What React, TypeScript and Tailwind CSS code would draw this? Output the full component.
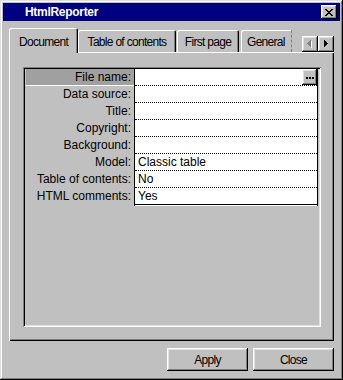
import React from "react";

const raised =
  "shadow-[inset_-1px_-1px_#000,inset_1px_1px_#fff,inset_-2px_-2px_#808080,inset_2px_2px_#dfdfdf]";

const rows: [string, string][] = [
  ["File name:", ""],
  ["Data source:", ""],
  ["Title:", ""],
  ["Copyright:", ""],
  ["Background:", ""],
  ["Model:", "Classic table"],
  ["Table of contents:", "No"],
  ["HTML comments:", "Yes"],
];

function CloseX() {
  const px: [number, number][] = [
    [0, 0], [1, 0], [6, 0], [7, 0],
    [1, 1], [2, 1], [5, 1], [6, 1],
    [2, 2], [3, 2], [4, 2], [5, 2],
    [3, 3], [4, 3],
    [2, 4], [3, 4], [4, 4], [5, 4],
    [1, 5], [2, 5], [5, 5], [6, 5],
    [0, 6], [1, 6], [6, 6], [7, 6],
  ];
  return (
    <svg width="8" height="7" viewBox="0 0 8 7" shapeRendering="crispEdges">
      {px.map(([x, y], i) => (
        <rect key={i} x={x} y={y} width="1" height="1" fill="#000" />
      ))}
    </svg>
  );
}

function Arrow({ dir, disabled }: { dir: "left" | "right"; disabled?: boolean }) {
  const cols =
    dir === "right"
      ? [
          [0, 0, 7],
          [1, 1, 5],
          [2, 2, 3],
          [3, 3, 1],
        ]
      : [
          [0, 3, 1],
          [1, 2, 3],
          [2, 1, 5],
          [3, 0, 7],
        ];
  return (
    <svg width="6" height="9" viewBox="0 0 6 9" shapeRendering="crispEdges">
      {disabled &&
        cols.map(([x, y, h], i) => (
          <rect key={"s" + i} x={x + 1} y={y + 1} width="1" height={h} fill="#fff" />
        ))}
      {cols.map(([x, y, h], i) => (
        <rect key={i} x={x} y={y} width="1" height={h} fill={disabled ? "#808080" : "#000"} />
      ))}
    </svg>
  );
}

export default function App() {
  return (
    <div className="w-[343px] h-[380px] bg-[#c0c0c0] p-[3px] flex flex-col shadow-[inset_-1px_-1px_#000,inset_1px_1px_#dfdfdf,inset_-2px_-2px_#808080,inset_2px_2px_#fff] font-['Liberation_Sans',Arial,sans-serif] text-black overflow-hidden">
      {/* Title bar */}
      <div className="h-[18px] bg-[#000080] flex items-center pl-[22px] pr-[3px]">
        <span className="text-white font-bold text-[12px] leading-[18px] tracking-[-0.3px]">HtmlReporter</span>
        <div className={`ml-auto w-[16px] h-[14px] bg-[#c0c0c0] flex items-center justify-center ${raised}`}>
          <div className="pl-[0px] pt-[0px]">
            <CloseX />
          </div>
        </div>
      </div>

      {/* Tabs row */}
      <div className="h-[31px] px-[6px] flex items-end text-[12px] tracking-[-0.7px]">
        <div className="relative z-10 -mb-px h-[25px] w-[69px] bg-[#c0c0c0] rounded-t-[2px] shadow-[inset_1px_1px_#fff,inset_-1px_0_#000,inset_-2px_0_#808080] flex justify-center pt-[6px] leading-[16px]">
          Document
        </div>
        <div className="h-[22px] w-[98px] rounded-t-[2px] shadow-[inset_1px_1px_#fff,inset_-1px_0_#000,inset_-2px_0_#808080] flex justify-center pt-[4px] leading-[16px]">
          Table of contents
        </div>
        <div className="ml-[1px] h-[22px] w-[62px] rounded-t-[2px] shadow-[inset_1px_1px_#fff,inset_-1px_0_#000,inset_-2px_0_#808080] flex justify-center pt-[4px] leading-[16px]">
          First page
        </div>
        <div className="ml-[2px] h-[22px] w-[51px] rounded-tl-[2px] shadow-[inset_1px_1px_#fff] border-r border-dashed border-[#808080] flex pl-[6px] pt-[4px] leading-[16px] overflow-hidden whitespace-nowrap">
          General
        </div>
        <div className="ml-auto flex">
          <div className={`w-[16px] h-[16px] flex items-center justify-center ${raised}`}>
            <Arrow dir="left" disabled />
          </div>
          <div className={`w-[16px] h-[16px] flex items-center justify-center pl-[1px] ${raised}`}>
            <Arrow dir="right" />
          </div>
        </div>
      </div>

      {/* Panel */}
      <div className="mx-[6px] h-[289px] shadow-[inset_1px_1px_#fff,inset_-1px_-1px_#000,inset_-2px_-2px_#808080] pt-[15px] pl-[14px]">
        <div className="w-[298px] h-[260px] p-[2px] flex shadow-[inset_1px_1px_#808080,inset_-1px_-1px_#fff,inset_2px_2px_#000,inset_-2px_-2px_#dfdfdf] text-[12px]">
          {/* Labels */}
          <div className="w-[109px] flex flex-col">
            {rows.map(([label], i) =>
              i === 0 ? (
                <div
                  key={i}
                  className="h-[17px] ml-[1px] bg-[#a0a0a0] border-b border-white text-right pr-[3px] leading-[16px] whitespace-nowrap"
                >
                  {label}
                </div>
              ) : (
                <div key={i} className="h-[17px] text-right pr-[3px] leading-[16px] whitespace-nowrap">
                  {label}
                </div>
              )
            )}
          </div>
          {/* Values */}
          <div className="w-[184px] h-[137px] bg-white border-l border-r border-black flex flex-col">
            {rows.map(([, value], i) => (
              <div
                key={i}
                className={`h-[17px] flex items-start pl-[3px] leading-[16px] border-b ${
                  i === rows.length - 1 ? "border-solid border-black" : "border-dotted border-black"
                }`}
              >
                <span className="whitespace-nowrap">{value}</span>
                {i === 0 && (
                  <div className={`ml-auto w-[15px] h-[16px] bg-[#c0c0c0] flex items-center justify-center gap-[1px] pt-[1px] ${raised}`}>
                    <span className="w-[2px] h-[2px] bg-black" />
                    <span className="w-[2px] h-[2px] bg-black" />
                    <span className="w-[2px] h-[2px] bg-black" />
                  </div>
                )}
              </div>
            ))}
          </div>
        </div>
      </div>

      {/* Buttons */}
      <div className="mt-[7px] px-[6px] flex justify-end gap-[5px] text-[12px] tracking-[-0.7px]">
        <div className={`w-[81px] h-[23px] flex items-center justify-center leading-[16px] ${raised}`}>Apply</div>
        <div className={`w-[81px] h-[23px] flex items-center justify-center leading-[16px] ${raised}`}>Close</div>
      </div>
    </div>
  );
}
